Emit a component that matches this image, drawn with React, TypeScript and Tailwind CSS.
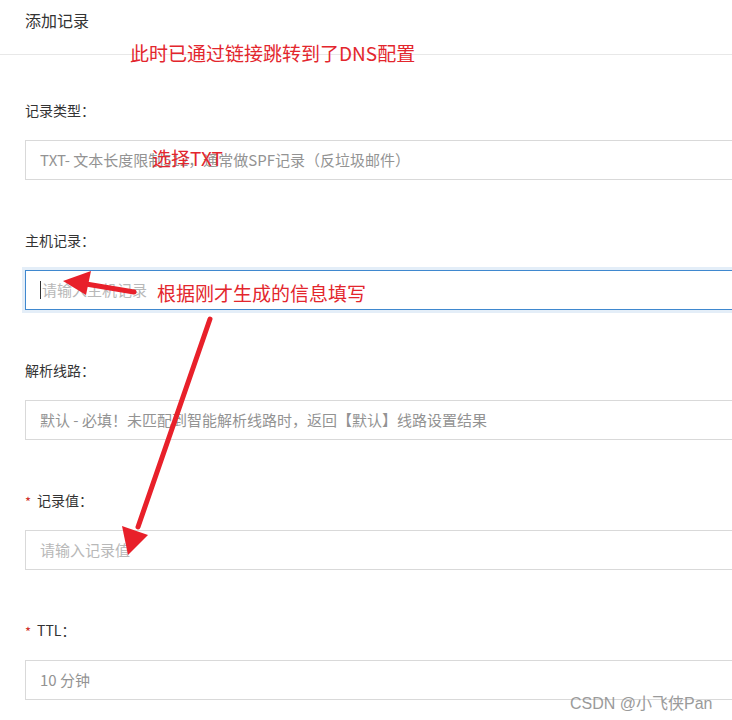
const font = { fontFamily: '"Microsoft YaHei", "Noto Sans CJK SC", "Liberation Sans", sans-serif' }

type Field = {
  label: string
  required?: boolean
  value: string
  placeholder?: boolean
  focused?: boolean
}

const fields: Field[] = [
  { label: '记录类型：', value: 'TXT- 文本长度限制512，通常做SPF记录（反垃圾邮件）' },
  { label: '主机记录：', value: '请输入主机记录', placeholder: true, focused: true },
  { label: '解析线路：', value: '默认 - 必填！未匹配到智能解析线路时，返回【默认】线路设置结果' },
  { label: '记录值：', value: '请输入记录值', placeholder: true, required: true },
  { label: 'TTL：', value: '10 分钟', required: true },
]

function FormRow({ field }: { field: Field }) {
  return (
    <div className="mb-[50px]">
      <div className="flex h-5 items-center text-[14px] leading-5 text-[#333]">
        {field.required && <span className="mr-[6px] mt-[3px] text-[13px] text-[#d0312d]">*</span>}
        {field.label}
      </div>
      <div
        className={`relative mt-5 flex h-10 w-[760px] items-center border bg-white pl-[14px] text-[15px] ${
          field.focused
            ? 'border-[#3f88cf] shadow-[0_0_0_3px_rgba(63,136,207,0.14)]'
            : 'border-[#d9d9d9]'
        } ${field.placeholder ? 'text-[#b8b8b8]' : 'text-[#939393]'}`}
      >
        {field.focused && <span className="mr-px h-[18px] w-px bg-[#333]" />}
        {field.value}
      </div>
    </div>
  )
}

export default function App() {
  return (
    <div className="relative h-[720px] w-[732px] overflow-hidden bg-white" style={font}>
      <div className="h-[55px] border-b border-[#e8e8e8] pl-[25px] pt-[9px] text-[16px] leading-[22px] text-[#333]">
        添加记录
      </div>

      <div className="pl-[25px] pt-[45px]">
        {fields.map((f) => (
          <FormRow key={f.label} field={f} />
        ))}
      </div>

      {/* annotations */}
      <span className="absolute left-[130px] top-[41px] text-[19px] leading-6 text-[#e3262d]">
        此时已通过链接跳转到了DNS配置
      </span>
      <span className="absolute left-[152px] top-[146px] text-[19px] leading-6 text-[#e3262d]">
        选择TXT
      </span>
      <span className="absolute left-[157px] top-[281px] text-[19px] leading-6 text-[#e3262d]">
        根据刚才生成的信息填写
      </span>

      <svg className="pointer-events-none absolute left-0 top-0" width="732" height="720">
        <line x1="134" y1="292" x2="80" y2="283" stroke="#e8202a" strokeWidth="5" strokeLinecap="round" />
        <polygon points="63,281 91,271 86,295" fill="#e8202a" />
        <line x1="210" y1="319" x2="138" y2="527" stroke="#e8202a" strokeWidth="5" strokeLinecap="round" />
        <polygon points="128,555 122,526 148,535" fill="#e8202a" />
      </svg>

      <span
        className="absolute left-[570px] top-[692px] text-[16px] leading-6 text-[#9a9a9a]"
        style={{ fontFamily: '"Liberation Sans", "Noto Sans CJK SC", sans-serif' }}
      >
        CSDN @小飞侠Pan
      </span>
    </div>
  )
}
